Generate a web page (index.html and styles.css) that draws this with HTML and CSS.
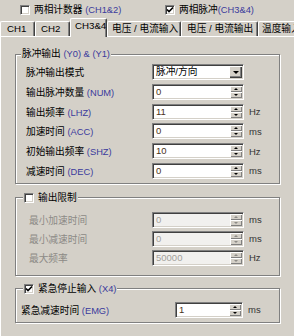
FILE: index.html
```html
<!DOCTYPE html>
<html lang="zh-CN">
<head>
    <meta charset="UTF-8" />
    <meta name="viewport" content="width=device-width, initial-scale=1.0" />
    <title>CH3&amp;4 设置</title>
    <link rel="stylesheet" href="styles.css">
</head>
<body>
    <div class="window">
        <div class="modes">
            <label class="check mode-a"><span class="box"></span>两相计数器 <span class="en">(CH1&amp;2)</span></label>
            <label class="check mode-b"><span class="box"><svg viewBox="0 0 8 8" width="8" height="8"><path d="M1 3.5 L3 5.5 L7 1.5" fill="none" stroke="#000" stroke-width="1.6"/></svg></span>两相脉冲<span class="en">(CH3&amp;4)</span></label>
        </div>

        <div class="tabs">
            <div class="tab t-ch1">CH1</div>
            <div class="tab t-ch2">CH2</div>
            <div class="tab active t-ch34">CH3&amp;4</div>
            <div class="tab t-vin">电压 / 电流输入</div>
            <div class="tab t-vout">电压 / 电流输出</div>
            <div class="tab t-temp">温度输入</div>
        </div>

        <div class="panel">
            <fieldset class="group g-pulse">
                <legend>脉冲输出 <span class="en">(Y0) &amp; (Y1)</span></legend>
                <div class="rows">
                    <span class="lbl">脉冲输出模式</span>
                    <div class="field combo"><span class="val cn">脉冲/方向</span><span class="drop"></span></div>
                    <span class="unit"></span>

                    <span class="lbl">输出脉冲数量 <span class="en">(NUM)</span></span>
                    <div class="field spin"><span class="val">0</span><span class="arrows"><i></i><i class="down"></i></span></div>
                    <span class="unit"></span>

                    <span class="lbl">输出频率 <span class="en">(LHZ)</span></span>
                    <div class="field spin"><span class="val">11</span><span class="arrows"><i></i><i class="down"></i></span></div>
                    <span class="unit">Hz</span>

                    <span class="lbl">加速时间 <span class="en">(ACC)</span></span>
                    <div class="field spin"><span class="val">0</span><span class="arrows"><i></i><i class="down"></i></span></div>
                    <span class="unit">ms</span>

                    <span class="lbl">初始输出频率 <span class="en">(SHZ)</span></span>
                    <div class="field spin"><span class="val">10</span><span class="arrows"><i></i><i class="down"></i></span></div>
                    <span class="unit">Hz</span>

                    <span class="lbl">减速时间 <span class="en">(DEC)</span></span>
                    <div class="field spin"><span class="val">0</span><span class="arrows"><i></i><i class="down"></i></span></div>
                    <span class="unit">ms</span>
                </div>
            </fieldset>

            <fieldset class="group g-limit">
                <legend class="check"><span class="box"></span>输出限制</legend>
                <div class="rows">
                    <span class="lbl off">最小加速时间</span>
                    <div class="field spin off"><span class="val">0</span><span class="arrows"><i></i><i class="down"></i></span></div>
                    <span class="unit">ms</span>

                    <span class="lbl off">最小减速时间</span>
                    <div class="field spin off"><span class="val">0</span><span class="arrows"><i></i><i class="down"></i></span></div>
                    <span class="unit">ms</span>

                    <span class="lbl off">最大频率</span>
                    <div class="field spin off"><span class="val">50000</span><span class="arrows"><i></i><i class="down"></i></span></div>
                    <span class="unit">Hz</span>
                </div>
            </fieldset>

            <fieldset class="group g-stop">
                <legend class="check"><span class="box"><svg viewBox="0 0 8 8" width="8" height="8"><path d="M1 3.5 L3 5.5 L7 1.5" fill="none" stroke="#000" stroke-width="1.6"/></svg></span>紧急停止输入 <span class="en">(X4)</span></legend>
                <div class="rows">
                    <span class="lbl">紧急减速时间 <span class="en">(EMG)</span></span>
                    <div class="field spin"><span class="val">1</span><span class="arrows"><i></i><i class="down"></i></span></div>
                    <span class="unit">ms</span>
                </div>
            </fieldset>
        </div>
    </div>
</body>
</html>
```

FILE: styles.css
```css
* {
    margin: 0;
    padding: 0;
    box-sizing: border-box;
}

body {
    background: #d4d0c8;
    font-family: "Liberation Sans", "Noto Sans CJK SC", sans-serif;
    font-size: 9.7px;
    color: #000;
    overflow: hidden;
}

.window {
    width: 294px;
    height: 336px;
    overflow: hidden;
}

.en {
    font-size: 9.3px;
    color: #3a3a9c;
}

/* top mode checkboxes */
.modes {
    height: 19px;
    display: flex;
    align-items: center;
    padding-left: 20px;
}

.check {
    display: flex;
    align-items: center;
    white-space: pre;
    line-height: 12px;
}

.mode-a {
    width: 145px;
}

.box {
    width: 10px;
    height: 10px;
    margin-right: 4px;
    background: #fff;
    border-top: 1px solid #808080;
    border-left: 1px solid #808080;
    border-right: 1px solid #fff;
    border-bottom: 1px solid #fff;
    box-shadow: inset 1px 1px 0 #404040, inset -1px -1px 0 #d4d0c8;
    display: flex;
    align-items: center;
    justify-content: center;
    flex: none;
}

/* tabs */
.tabs {
    height: 17px;
    display: flex;
    align-items: flex-end;
    position: relative;
    z-index: 1;
}

.tab {
    flex: none;
    height: 15px;
    line-height: 14px;
    white-space: nowrap;
    border-top: 1px solid #fff;
    border-left: 1px solid #fff;
    border-right: 1px solid #404040;
    box-shadow: inset -1px 0 0 #808080;
    border-radius: 2px 2px 0 0;
    background: #d4d0c8;
}

.tab.active {
    height: 19px;
    margin-bottom: -1px;
    line-height: 14px;
}

.t-ch1 { width: 35px; padding-left: 6px; }
.t-ch2 { width: 35px; padding-left: 5px; }
.t-ch34 { width: 37px; padding-left: 4px; }
.t-vin { width: 74px; padding-left: 4px; }
.t-vout { width: 77px; padding-left: 5px; }
.t-temp { width: 60px; padding-left: 3px; border-right: none; }

/* tab page */
.panel {
    height: 300px;
    border-top: 1px solid #fff;
    border-left: 1px solid #fff;
    padding-left: 14px;
    padding-top: 11px;
}

.group {
    width: 265px;
    border: 1px solid #808080;
    box-shadow: 1px 1px 0 #fff, inset 1px 1px 0 #fff;
    padding: 0;
}

.group legend {
    line-height: 12px;
    padding: 0 1px;
    margin-left: 5px;
    background: #d4d0c8;
    white-space: pre;
}

.group legend.check {
    margin-left: 7px;
}

.rows {
    display: grid;
    grid-auto-rows: 16px;
    align-items: center;
}

.g-pulse .rows {
    grid-template-columns: 126px 92px 1fr;
    row-gap: 3.8px;
    padding: 4px 0 4px 10px;
}

.g-limit {
    margin-top: 8px;
}

.g-limit .rows {
    grid-template-columns: 123px 92px 1fr;
    row-gap: 3px;
    padding: 8px 0 9px 13px;
}

.g-stop {
    margin-top: 7px;
}

.g-stop .rows {
    grid-template-columns: 154px 68px 1fr;
    padding: 7px 0 4px 5px;
}

.lbl {
    white-space: pre;
}

.lbl.off {
    color: #8c8a86;
}

.unit {
    padding-left: 5px;
    color: #333;
    font-size: 9.5px;
}

/* edit boxes */
.field {
    height: 16px;
    display: flex;
    background: #fff;
    border-top: 1px solid #808080;
    border-left: 1px solid #808080;
    border-right: 1px solid #fff;
    border-bottom: 1px solid #fff;
    box-shadow: inset 1px 1px 0 #404040, inset -1px -1px 0 #d4d0c8;
    padding: 1px;
}

.val {
    flex: 1;
    padding-left: 2px;
    line-height: 12px;
    font-size: 9.5px;
    color: #4a3320;
}

.val.cn {
    color: #000;
    font-size: 9.7px;
}

.field.off {
    background: #f1f0ee;
}

.field.off .val {
    color: #a3a09b;
}

.arrows {
    width: 12px;
    display: flex;
    flex-direction: column;
}

.arrows i {
    flex: 1;
    background: #d4d0c8;
    box-shadow: inset 1px 1px 0 #fff, inset -1px -1px 0 #808080;
    display: flex;
    align-items: center;
    justify-content: center;
}

.arrows i::after {
    content: "";
    border-left: 2px solid transparent;
    border-right: 2px solid transparent;
    border-bottom: 2px solid #000;
}

.arrows i.down::after {
    border-bottom: none;
    border-top: 2px solid #000;
}

.field.off .arrows i::after {
    border-bottom-color: #8c8a86;
    border-top-color: #8c8a86;
}

.drop {
    width: 13px;
    background: #d4d0c8;
    box-shadow: inset 1px 1px 0 #fff, inset -1px -1px 0 #404040, inset -2px -2px 0 #808080;
    display: flex;
    align-items: center;
    justify-content: center;
}

.drop::after {
    content: "";
    border-left: 3px solid transparent;
    border-right: 3px solid transparent;
    border-top: 3px solid #000;
}
```
